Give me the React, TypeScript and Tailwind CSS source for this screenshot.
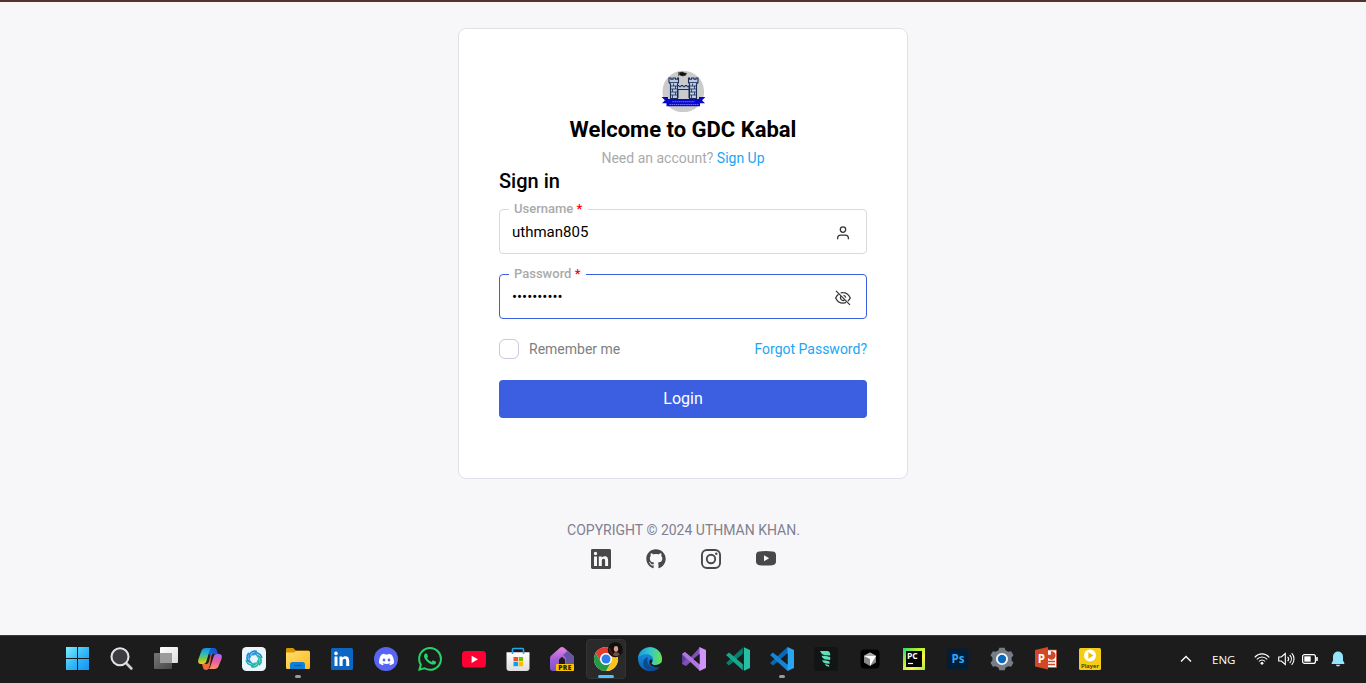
import React, { useId } from "react";
import { SiDiscord, SiWhatsapp } from "react-icons/si";
import { FaGithub } from "react-icons/fa";

type GradProps = { id: string; stops: string[]; x2?: number; y2?: number };
const Grad = ({ id, stops, x2 = 1, y2 = 1 }: GradProps) => (
  <linearGradient id={id} x1="0" y1="0" x2={x2} y2={y2}>
    {stops.map((c, i) => (
      <stop key={i} offset={i / (stops.length - 1)} stopColor={c} />
    ))}
  </linearGradient>
);

const Svg = ({ children }: { children: React.ReactNode }) => (
  <svg viewBox="0 0 24 24" className="block size-6 shrink-0">
    {children}
  </svg>
);

const Crest = () => (
  <svg viewBox="-0.5 -0.5 44 42" className="block h-[42px] w-11">
    <circle cx="21.8" cy="21" r="20.8" fill="#cbcbcb" />
    <path d="M17 1.200v4.500M18 2l3-.4 2 1 2 .2-1 2-3 .6-3-1z" stroke="#222" strokeWidth=".6" fill="#111" />
    <path d="M7.500 7.500h2v1.200h2V7.500h2.500v1.200h2V7.500h1v4.500l-1 1.500v14.500H9V13.500L7.500 12z" fill="#bccbe2" stroke="#1b2c58" strokeWidth="1.100" />
    <path d="M36.500 7.500h-2v1.200h-2V7.500H30v1.200h-2V7.500h-1v4.500l1 1.500V28h7V13.500l1.500-1.500z" fill="#bccbe2" stroke="#1b2c58" strokeWidth="1.100" />
    <path d="M16 15h1.500v1.200h2V15h2v1.200h2V15h2v1.200h2V15v4H16z" fill="#bccbe2" stroke="#1b2c58" strokeWidth="1" />
    <path d="M16.500 19.500v8M27.500 19.500v8" stroke="#1b2c58" strokeWidth="1" />
    <path d="M8 12h9M27 12h9M9 15.500h7M9 18.500h7M9 21.500h7M9 24.500h7M28 15.500h7M28 18.500h7M28 21.500h7M28 24.500h7M12 13v2.500M14 15.500v3M11 18.500v3M14 21.500v3M11 24.500v3M31 13v2.500M33 15.500v3M30 18.500v3M33 21.500v3M30 24.500v3" stroke="#1b2c58" strokeWidth=".8" />
    <path d="M0 26.500h6.500v2h31v-2H44l-3.500 3.300 3 3h-5v3H5v-3H.5l3-3z" fill="#0808cf" />
    <path d="M11 31.200h22M8 34h29" stroke="#8e8eef" strokeWidth=".8" strokeDasharray="1.500 .6" />
  </svg>
);

const UserIcon = () => (
  <svg viewBox="0 0 16 16" className="block size-4" fill="none" stroke="#333" strokeWidth="1.300">
    <circle cx="8" cy="4.600" r="2.700" />
    <path d="M2.600 14.200v-.9c0-2 1.200-3.200 3.100-3.200h4.600c1.900 0 3.100 1.200 3.100 3.200v.9" />
  </svg>
);

const EyeOffIcon = () => (
  <svg viewBox="0 0 16 16" className="block size-4" fill="none" stroke="#333" strokeWidth="1.250">
    <path d="M1 .9l14 14" />
    <path d="M5.600 3A7.300 7.300 0 0 1 8 2.700c3.300 0 5.800 2 7.300 5.200a9.400 9.400 0 0 1-2.400 3.100M3.500 4.200A9.600 9.600 0 0 0 .7 7.900c1.500 3.200 4 5.200 7.300 5.200 1.100 0 2.200-.2 3.100-.7" />
    <path d="M5.900 6.200a2.700 2.700 0 0 0 3.700 3.800M8.500 5.300a2.700 2.700 0 0 1 2.200 2.300" />
  </svg>
);

type FieldProps = {
  label: string;
  type: string;
  value: string;
  focused?: boolean;
  icon: React.ReactNode;
};
const Field = ({ label, type, value, focused, icon }: FieldProps) => {
  const id = useId();
  return (
    <div
      className={`relative flex h-[45px] items-center rounded border pt-0.5 pr-[15px] pl-3 ${focused ? "border-[#3c5fe1]" : "border-[#dadada]"}`}
    >
      <label
        htmlFor={id}
        className="absolute -top-[9px] left-[9px] bg-white pr-1.5 pl-[5px] text-[13px] leading-4 font-medium text-[#aaaaaa]"
      >
        {label} <span className="text-[#ff0000]">*</span>
      </label>
      <input
        id={id}
        type={type}
        defaultValue={value}
        className="min-w-0 flex-1 bg-transparent text-[15px] text-black outline-none"
      />
      {icon}
    </div>
  );
};

const Windows = () => (
  <Svg>
    <defs><Grad id="win" stops={["#7df0ff", "#35b9f7", "#1293f5"]} /></defs>
    <path d="M0 0h11v11H0zM12 0h11v11H12zM0 12h11v11H0zM12 12h11v11H12z" fill="url(#win)" />
  </Svg>
);
const Search = () => (
  <Svg>
    <path d="M16.500 16.500l4.900 5" stroke="#d0d0d3" strokeWidth="2.600" strokeLinecap="round" />
    <circle cx="10" cy="9.800" r="8.500" fill="#3c3d3f" stroke="#e3e3e6" strokeWidth="2.100" />
  </Svg>
);
const TaskView = () => (
  <Svg>
    <defs><Grad id="tv" stops={["#fff", "#ddd"]} /><Grad id="tw" stops={["#777", "#484848"]} /></defs>
    <rect x="6" y="0" width="18" height="16" rx="1" fill="url(#tv)" />
    <rect x="0" y="6" width="18" height="16" rx="1" fill="url(#tw)" />
    <path d="M6 6h12v10H6z" fill="#9c9c9c" />
  </Svg>
);
const Copilot = () => (
  <Svg>
    <defs>
      <Grad id="cp1" stops={["#198de0", "#25b9c4", "#7fc64a", "#f5ce16"]} x2={0} />
      <Grad id="cp2" stops={["#9d66f5", "#ef5ca2", "#fd9560"]} x2={0} />
    </defs>
    <path d="M7 1h9c2 0 2.500 1.500 3 3l1 3h-4c-2 0-2.500 1-3 3z" fill="#1757cf" />
    <path d="M8 23c-2 0-2.600-1.300-3-2.500L4 17h4c2 0 2.500-1 3-3l3-10-2 14c-.7 3-2 5-4 5z" fill="#ef6a3b" />
    <path d="M8 1h6c-1.500 0-2 1.400-2.500 3L8.500 14c-.6 2-1.300 3-3.500 3H3c-3 0-3.300-2.500-2.500-5L3 5c.8-2.500 2-4 5-4z" fill="url(#cp1)" />
    <path d="M16 22h-6c1.500 0 2-1.400 2.500-3l3-9c.6-2 1.300-3 3.500-3h2c3 0 3.300 2.500 2.500 5L21 18c-.8 2.500-2 4-5 4z" fill="url(#cp2)" />
  </Svg>
);
const Swirl = () => (
  <Svg>
    <rect width="24" height="24" rx="4.500" fill="#e9f5fa" />
    <g transform="translate(12 12)" fill="none" strokeWidth="1.700" strokeLinecap="round">
      {[0, 60, 120, 180, 240, 300].map((a) => (
        <path
          key={a}
          d="M-4.800 -1.200C-5.600 -5.400 -1.600 -8.600 2.200 -7.600"
          transform={`rotate(${a})`}
          stroke={a > 60 && a < 250 ? "#1fb2a2" : "#1c88dc"}
        />
      ))}
      {[30, 90, 150, 210, 270, 330].map((a) => (
        <path
          key={a}
          d="M-3.800 -2.600L0 -5.200"
          transform={`rotate(${a})`}
          strokeWidth="1.200"
          stroke={a > 60 && a < 250 ? "#2bbcb4" : "#35a3e4"}
        />
      ))}
    </g>
  </Svg>
);
const Folder = () => (
  <Svg>
    <defs><Grad id="fo" stops={["#ffdf70", "#ffb91c"]} /></defs>
    <path d="M0 2.200Q0 1 1.200 1h6l2.500 2.500H22q2 0 2 2V9H0z" fill="#dc9400" />
    <path d="M0 5.500h8l2-1.500h12.500q1.500 0 1.500 1.500v15.300q0 1.200-1.200 1.200H1.200Q0 22 0 20.800z" fill="url(#fo)" />
    <path d="M4 22v-4.500q0-2.500 2.500-2.500h10q2.500 0 2.500 2.500V22z" fill="#0f7fd3" />
    <path d="M8 18.500h7.500" stroke="#0a5da6" strokeWidth="1.200" />
  </Svg>
);
const LinkedIn = () => (
  <Svg>
    <rect x="1" y="1" width="22" height="22" rx="1.500" fill="#0a66c2" />
    <circle cx="6" cy="6.400" r="1.800" fill="#fff" />
    <path d="M4.500 9.500h3V19h-3zM9.500 9.500h2.800v1.300c.6-1 1.700-1.600 3.100-1.600 2.900 0 3.800 1.800 3.800 4.600V19h-3v-4.700c0-1.400-.3-2.500-1.600-2.500-1.500 0-2 1.100-2 2.500V19H9.500z" fill="#fff" />
  </Svg>
);
const Discord = () => (
  <span className="flex size-6 items-center justify-center rounded-full bg-[#5865f2] text-white">
    <SiDiscord size={15} />
  </span>
);
const YouTube = () => (
  <Svg>
    <rect x="0" y="4" width="24" height="16.500" rx="3.500" fill="#ff0033" />
    <path d="M9.600 8.700l6.400 3.600-6.400 3.600z" fill="#fff" />
  </Svg>
);
const Store = () => (
  <Svg>
    <defs><Grad id="st" stops={["#fff", "#ddd"]} x2={0} /></defs>
    <path d="M.5 5.200h23V21q0 3-3 3h-17q-3 0-3-3z" fill="url(#st)" />
    <path d="M6.500 7V2.500q0-1 1-1h9q1 0 1 1V7" fill="none" stroke="#27a5e6" strokeWidth="1.600" />
    <path d="M7.500 10H12v4.300H7.500z" fill="#f25022" />
    <path d="M12.700 10h4.400v4.300h-4.400z" fill="#7fba00" />
    <path d="M7.500 15H12v4.200H7.500z" fill="#00a4ef" />
    <path d="M12.700 15h4.400v4.200h-4.400z" fill="#ffb900" />
  </Svg>
);
const DevHome = () => (
  <Svg>
    <defs><Grad id="dh" stops={["#e985e4", "#a65fd8", "#7854c9"]} x2={0} /></defs>
    <path d="M10 .8q2-1.600 4 0l8.700 7.500q1.300 1.200 1.300 3V22q0 2-2 2H3q-3 0-3-3v-9.500q0-1.800 1.300-3z" fill="url(#dh)" />
    <path d="M17.500 4l5.200 4.300q1.300 1.200 1.300 3V18h-8v-7l-3-3z" fill="#6854a5" />
    <path d="M9 19v-6.500l3-2.700 3 2.700V19z" fill="#1c1c1c" />
    <rect x="6" y="17" width="18" height="7" rx="1" fill="#ffc400" />
    <text x="15" y="22.900" textAnchor="middle" fontFamily="Open Sans, sans-serif" fontSize="6.700" fontWeight="800" letterSpacing=".3" fill="#241c00">PRE</text>
  </Svg>
);
const Chrome = () => (
  <svg viewBox="0 0 34 34" className="block size-[34px] shrink-0">
    <g transform="translate(5 2)">
      <circle cx="12" cy="15" r="12" fill="#fff" />
      <path d="M1.600 9A12 12 0 0 1 22.400 9H12a6 6 0 0 0-5.200 9z" fill="#e63c30" />
      <path d="M22.400 9A12 12 0 0 1 12 27l5.200-9A6 6 0 0 0 12 9z" fill="#fcc31e" />
      <path d="M12 27A12 12 0 0 1 1.600 9l5.200 9A6 6 0 0 0 17.200 18z" fill="#269846" />
      <circle cx="12" cy="15" r="5.600" fill="#fff" />
      <circle cx="12" cy="15" r="4.500" fill="#2d7df0" />
    </g>
    <circle cx="26.300" cy="7.800" r="7.500" fill="#160d0d" />
    <ellipse cx="27" cy="6.800" rx="2.200" ry="2.900" fill="#cfa18e" />
    <path d="M23.500 13l2.500-3 3 .5 2 2q-3.500 3-7.500.5" fill="#6a4f49" />
    <path d="M20.500 6q0 4 3 6" stroke="#571d1b" strokeWidth="1.500" fill="none" />
  </svg>
);
const Edge = () => (
  <Svg>
    <defs>
      <Grad id="ed1" stops={["#189bdc", "#34c7c9", "#6ae34b"]} y2={0} />
      <Grad id="ed2" stops={["#1b9de2", "#0b5fb6"]} x2={0} />
    </defs>
    <circle cx="12" cy="12" r="12" fill="url(#ed2)" />
    <path d="M.1 11A12 12 0 0 1 24 12c0 4-3 6-6.500 6-2.500 0-4-1-4-1.800 0-.7 1.500-1.600 1.500-4 0-3-3-5-6.500-5C4.500 7.200 1 9 .1 11z" fill="url(#ed1)" />
    <path d="M10 10c-2 4 0 11 9 10.500 1.500-.1 2.500-.8 3-.6-4 5-13 5.500-16 0-2-4-.5-8.500 4-9.900z" fill="#0c4a94" />
    <path d="M13 12.300c1.600.2 1.900 2 .5 3.900 0 1 1.500 1.900 4 1.900 2.700 0 4.700-1 5.700-2.500l.6 2.400-1.500 2c-5 1.500-11-1-11-5 0-1.300.7-2.500 1.700-2.700z" fill="#1c1c1c" />
  </Svg>
);
const VisualStudio = () => (
  <Svg>
    <path d="M0 7l3-2 6 5 9-10 1 6L4 19l-4-2z" fill="#8050b8" />
    <path d="M0 7v10l4-5z" fill="#5d3e99" />
    <path d="M3 5l15.500 13L18 24 0 7z" fill="#b076de" />
    <path d="M17.500 0L24 3v18l-6.500 3z" fill="#d095fa" />
    <path d="M17.500 7v10l-6-5z" fill="#1c1c1c" />
  </Svg>
);
const Code = ({ light, mid, dark, split }: { light: string; mid: string; dark: string; split?: boolean }) => (
  <Svg>
    <path d="M17.500 0l2 5L3 18.500l-3-2.500z" fill={dark} />
    <path d="M0 8l3-2.500L19.500 19l-2 5z" fill={mid} />
    <path d="M17.500 0L24 3v18l-6.500 3z" fill={light} />
    <path d="M17.500 6.500v11L10.700 12z" fill="#1c1c1c" />
    {split && <path d="M17.300 0v24" stroke="#1c1c1c" strokeWidth="1" />}
  </Svg>
);
const Fern = () => (
  <Svg>
    <rect width="24" height="24" rx="2" fill="#111514" />
    <path d="M6 4h7q3.500 0 3.200 4.600Q13 8 10.500 8.200 7 7 6 4zM7.500 8.800q4.500.1 8.700 1.200v3Q13 12.400 11 12.600 8.200 11.500 7.500 8.800zM8 13.200q4.200 0 7.600 1.200v2.400q-2.300-.4-4-.3Q8.500 15.500 8 13.200zM10.500 17.300q2.800 0 4.700 1v1.500Q12 19.300 10.500 17.300z" fill="#5ee1ba" />
  </Svg>
);
const Cursor = () => (
  <Svg>
    <rect x="2.500" y="2.500" width="19" height="19" rx="4" fill="#000" />
    <path d="M12 5.500l6 3.300v6.700l-6 3.500-6-3.500V8.800z" fill="#888" />
    <path d="M6 8.800l6-3.300 6 3.300-6 3.200z" fill="#aaa" />
    <path d="M6 9h12l-6 10v-7z" fill="#fff" />
  </Svg>
);
const PyCharm = () => (
  <Svg>
    <defs><Grad id="pc" stops={["#20d789", "#a8ed2d", "#fcf74f", "#a9e640"]} /></defs>
    <rect x="1" y="1" width="22" height="22" fill="url(#pc)" />
    <path d="M4 4h16v16H4z" fill="#050505" />
    <text x="5" y="12" fontFamily="Open Sans, sans-serif" fontSize="8.500" fontWeight="700" fill="#fff">PC</text>
    <path d="M6 16.500h5" stroke="#fff" strokeWidth="1.200" />
  </Svg>
);
const Photoshop = () => (
  <Svg>
    <rect x="1" y="1.500" width="21.500" height="21" rx="4" fill="#001e36" />
    <text x="11.900" y="15.800" textAnchor="middle" fontFamily="Open Sans, sans-serif" fontSize="11.500" fontWeight="700" fill="#31a8ff">Ps</text>
  </Svg>
);
const Settings = () => (
  <Svg>
    <path d="M8.500 3.200L9.300.8h5.400l.8 2.400 2.700 1.500 2.900-.5 2.400 4.100L21.600 10.500v3l1.900 2.200-2.400 4.100-2.900-.5-2.700 1.500-.8 2.400H9.300l-.8-2.400-2.700-1.500-2.900.5L.5 15.700l1.900-2.200v-3L.5 8.300l2.400-4.100 2.900.5z" fill="#767d86" />
    <circle cx="12" cy="12" r="5.100" fill="#0868bd" stroke="#f5f6f7" strokeWidth="1.900" />
  </Svg>
);
const PowerPoint = () => (
  <Svg>
    <path d="M12 3h10.500v17.500H12z" fill="#fff" stroke="#dc4c2c" strokeWidth=".8" />
    <path d="M14 8.500a3.500 3.500 0 1 0 3.500-3.500v3.500zM14 14.500h7M14 17.500h7" fill="#d24726" stroke="#d24726" strokeWidth="1.300" />
    <path d="M1 3l13-3v22.500L1 19.500z" fill="#d24726" />
    <text x="7.300" y="15.500" textAnchor="middle" fontFamily="Open Sans, sans-serif" fontSize="11.500" fontWeight="700" fill="#fff">P</text>
  </Svg>
);
const PotPlayer = () => (
  <Svg>
    <rect x="1" y="1" width="22" height="22" rx="1.500" fill="#f5cd16" />
    <circle cx="12" cy="8.500" r="6" fill="#fff" />
    <path d="M10.300 5.300l5.200 3.200-5.200 3.200z" fill="#f0bd00" />
    <text x="12" y="21" textAnchor="middle" fontFamily="Open Sans, sans-serif" fontSize="6" fontWeight="600" fill="#3c2c00">Player</text>
  </Svg>
);

type TaskbarApp = { name: string; icon: React.ReactNode; state?: "open" | "active" };
const APPS: TaskbarApp[] = [
  { name: "Start", icon: <Windows /> },
  { name: "Search", icon: <Search /> },
  { name: "Task view", icon: <TaskView /> },
  { name: "Copilot", icon: <Copilot /> },
  { name: "Assistant", icon: <Swirl /> },
  { name: "File Explorer", icon: <Folder />, state: "open" },
  { name: "LinkedIn", icon: <LinkedIn /> },
  { name: "Discord", icon: <Discord /> },
  { name: "WhatsApp", icon: <SiWhatsapp size={24} color="#25d366" /> },
  { name: "YouTube", icon: <YouTube /> },
  { name: "Store", icon: <Store /> },
  { name: "Dev Home", icon: <DevHome /> },
  { name: "Chrome", icon: <Chrome />, state: "active" },
  { name: "Edge", icon: <Edge /> },
  { name: "Visual Studio", icon: <VisualStudio /> },
  { name: "VS Code Insiders", icon: <Code light="#24bfa5" mid="#16a78d" dark="#087f6e" split /> },
  { name: "VS Code", icon: <Code light="#29a5f3" mid="#1684d4" dark="#0968b3" />, state: "open" },
  { name: "Fern", icon: <Fern /> },
  { name: "Cursor", icon: <Cursor /> },
  { name: "PyCharm", icon: <PyCharm /> },
  { name: "Photoshop", icon: <Photoshop /> },
  { name: "Settings", icon: <Settings /> },
  { name: "PowerPoint", icon: <PowerPoint /> },
  { name: "PotPlayer", icon: <PotPlayer /> },
];

const Tray = () => (
  <div className="flex h-full items-center pr-[21px] text-white">
    <svg viewBox="0 0 12 8" className="h-2 w-3" fill="none" stroke="#fff" strokeWidth="1.400"><path d="M1 6.500l5-5 5 5" /></svg>
    <span className="mt-0.5 ml-5 w-[25px] font-['Open_Sans',sans-serif] text-[11.500px] leading-4">ENG</span>
    <svg viewBox="0 0 16 14" className="ml-[17px] h-3.5 w-4" fill="none" stroke="#fff" strokeWidth="1.100">
      <path d="M.7 5.400C4.800.7 11.200.7 15.300 5.400M2.800 7.400c3-3.300 7.400-3.300 10.400 0M4.900 9.500c1.800-2 4.400-2 6.200 0" />
      <circle cx="8" cy="11.300" r="1.400" fill="#fff" stroke="none" />
    </svg>
    <svg viewBox="0 0 17 14" className="ml-2 h-3.5 w-[17px]" fill="none" stroke="#fff" strokeWidth="1.100">
      <path d="M.7 5v4h2.600l4 3.500v-11L3.300 5zM9.600 4.800c1.200 1.200 1.200 3.200 0 4.400M11.700 3c2.200 2.300 2.200 5.700 0 8M13.700 1.200c3.100 3.400 3.100 8.200 0 11.600" />
    </svg>
    <svg viewBox="0 0 16 10" className="ml-[7px] h-2.5 w-4" fill="none" stroke="#fff">
      <rect x=".6" y=".6" width="12.800" height="8.800" rx="2" strokeWidth="1.200" />
      <path d="M2.300 2.300h6.400v5.400H2.300z" fill="#fff" stroke="none" />
      <path d="M15 3v4" strokeWidth="1.600" />
    </svg>
    <svg viewBox="0 0 14 16" className="ml-[13px] h-4 w-3.5" fill="#94e5fc">
      <path d="M7 .5a5 5 0 0 0-5 5v4L.5 12.200q0 .8.700.8h11.600q.7 0 .7-.8L12 9.500v-4a5 5 0 0 0-5-5zM4.700 13.700h4.600q-.6 1.800-2.300 1.800t-2.300-1.800z" />
    </svg>
  </div>
);

export default function LoginPage() {
  return (
    <div className="flex h-screen flex-col overflow-hidden bg-[#f7f7fa] font-['Roboto',sans-serif] text-black">
      <div className="h-0.5 shrink-0 bg-[#54312f]" />
      <main className="flex min-h-0 flex-1 flex-col items-center pt-[26px]">
        <section className="h-[451px] w-[450px] shrink-0 rounded-lg border border-[#e0e0e9] bg-white px-10 pt-[41px]">
          <header className="flex flex-col items-center">
            <Crest />
            <h1 className="mt-1 text-[22px] leading-7 font-bold">Welcome to GDC Kabal</h1>
            <p className="mt-1 text-sm leading-5 text-[#aaaaaa]">
              Need an account? <a href="#" className="text-[#20a5f5]">Sign Up</a>
            </p>
          </header>
          <form onSubmit={(e) => e.preventDefault()}>
            <h2 className="mb-[15px] text-xl leading-[26px] font-medium">Sign in</h2>
            <div className="flex flex-col gap-5">
              <Field label="Username" type="text" value="uthman805" icon={<UserIcon />} />
              <Field label="Password" type="password" value="abcdefghij" focused icon={<EyeOffIcon />} />
            </div>
            <div className="mt-5 flex h-5 items-center justify-between text-sm">
              <label className="flex items-center gap-2.5 text-[#808080]">
                <input type="checkbox" className="size-5 appearance-none rounded-[6px] border border-[#c5cbdc] bg-white" />
                Remember me
              </label>
              <a href="#" className="text-[#20a5f5]">Forgot Password?</a>
            </div>
            <button className="mt-[21px] h-[38px] w-full rounded bg-[#3c5fe1] text-base text-white">Login</button>
          </form>
        </section>
        <footer className="mt-[41px] flex flex-col items-center">
          <p className="pl-px text-sm leading-5 text-[#80808f]">COPYRIGHT © 2024 UTHMAN KHAN.</p>
          <nav className="mt-[9px] flex items-center gap-[35px] text-[#484848]">
            <svg viewBox="0 0 20 20" className="size-5" fill="currentColor"><path fillRule="evenodd" d="M1.400 0h17.200Q20 0 20 1.400v17.200q0 1.400-1.400 1.400H1.400Q0 20 0 18.600V1.400Q0 0 1.400 0zM3 7.500V17h3V7.500zM4.500 2.800a1.700 1.700 0 1 0 0 3.400 1.700 1.700 0 0 0 0-3.400zM7.800 7.500V17h3v-4.700c0-1.300.3-2.500 1.800-2.500s1.500 1.400 1.500 2.500V17h3v-5.200c0-2.600-.6-4.500-3.500-4.500-1.400 0-2.400.8-2.800 1.500v-1.300z" /></svg>
            <FaGithub size={20} />
            <svg viewBox="0 0 20 20" className="size-5" fill="none" stroke="currentColor" strokeWidth="1.900"><rect x=".95" y=".95" width="18.100" height="18.100" rx="5" /><circle cx="10" cy="10" r="4.200" /><circle cx="15.300" cy="4.700" r="1.200" fill="currentColor" stroke="none" /></svg>
            <svg viewBox="0 0 20 20" className="size-5" fill="currentColor"><path fillRule="evenodd" d="M3.500 2.400Q10 1.600 16.500 2.400 20 2.800 20 6v6.500q0 3.200-3.500 3.700-6.500.8-13 0Q0 15.700 0 12.500V6q0-3.200 3.500-3.600zM8 6.300v6l5.200-3z" /></svg>
          </nav>
        </footer>
      </main>
      <div className="flex h-12 shrink-0 items-center justify-between border-t border-[#3a3a3a] bg-[#1c1c1c] pb-px">
        <ul className="flex h-full items-center pl-14">
          {APPS.map(({ name, icon, state }) => (
            <li
              key={name}
              aria-label={name}
              className={`relative flex items-center justify-center ${state === "active" ? "mx-0.5 size-10 rounded border border-[#343434] bg-[#2a2a2a]" : "h-10 w-11"}`}
            >
              {icon}
              {state === "open" && <span className="absolute bottom-px h-[3px] w-1.5 rounded-full bg-[#9b9b9b]" />}
              {state === "active" && <span className="absolute bottom-0 h-[3px] w-4 rounded-full bg-[#4cc2ff]" />}
            </li>
          ))}
        </ul>
        <Tray />
      </div>
    </div>
  );
}
